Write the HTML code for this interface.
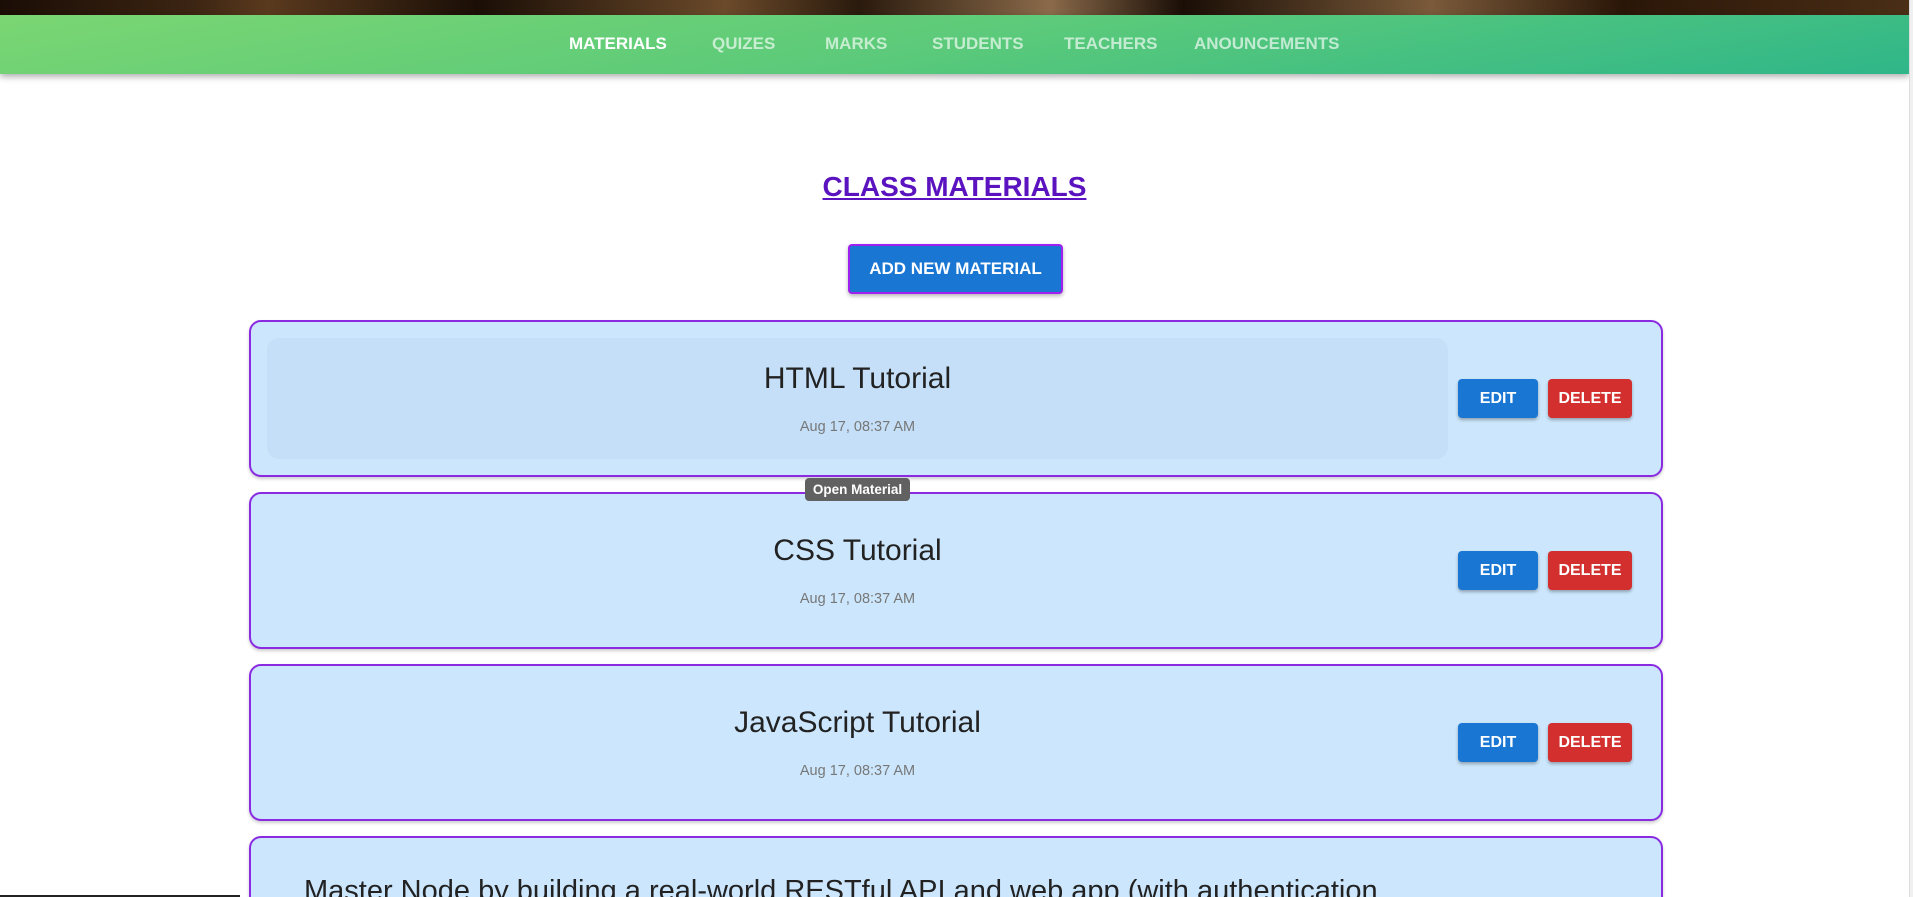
<!DOCTYPE html>
<html style="overflow:hidden;height:897px"><head><meta charset="utf-8"><style>
*{box-sizing:border-box;margin:0;padding:0}
body{width:1913px;height:897px;overflow:hidden;background:#fff;font-family:"Liberation Sans",Arial,sans-serif;position:relative}
.strip{position:absolute;left:0;top:0;width:1909px;height:15px;background:linear-gradient(90deg,#1a0d05 0%,#3b2412 10%,#5a3a1e 14%,#1a0e06 25%,#6b4a2a 38%,#2a1a0d 45%,#8a6a4a 55%,#1a0e06 62%,#7a5a3a 75%,#2a1608 85%,#4a2e16 100%)}
.nav{position:absolute;left:0;top:15px;width:1909px;height:59px;background:linear-gradient(170deg,#7bd672 0%,#5bca7a 50%,#2fb689 100%);box-shadow:0 3px 6px rgba(0,0,0,.3)}
.nav span{position:absolute;top:19px;font-size:17px;font-weight:bold;color:rgba(255,255,255,.65)}
.scroll{position:absolute;left:1909px;top:0;width:4px;height:897px;background:#f0f0f0;border-left:1px solid #ddd}
h1{position:absolute;left:0;width:1909px;top:171px;text-align:center;font-size:28px;font-weight:bold;color:#5b13c0;text-decoration:underline}
.add{position:absolute;left:848px;top:244px;width:215px;height:50px;background:#1976d2;border:2px solid #a020f0;border-radius:4px;color:#fff;font-weight:bold;font-size:17px;text-align:center;line-height:46px;box-shadow:0 2px 4px rgba(0,0,0,.3)}
.card{position:absolute;left:249px;width:1414px;height:157px;background:#cce7fd;border:2px solid #8a2be2;border-radius:12px;box-shadow:0 2px 3px rgba(0,0,0,.2);overflow:hidden}
.inner{position:absolute;left:16px;top:16px;width:1181px;height:121px;border-radius:12px}
.t{position:absolute;left:0;width:1181px;text-align:center;top:24px;font-size:30px;color:#222}
.d{position:absolute;left:0;width:1181px;text-align:center;top:81px;font-size:14.5px;color:#777}
.btn{position:absolute;top:57px;height:39px;border-radius:4px;color:#fff;font-weight:bold;font-size:16px;text-align:center;line-height:39px;box-shadow:0 2px 3px rgba(0,0,0,.3)}
.e{left:1207px;width:80px;background:#1976d2}
.x{left:1297px;width:84px;background:#d32f2f}
.tip{position:absolute;left:805px;top:478px;width:105px;height:23px;background:#616161;border-radius:4px;color:#fff;font-size:13.5px;font-weight:bold;text-align:center;line-height:23px}
</style></head><body>
<div class="strip"></div>
<div class="nav">
<span style="left:569px;color:#fff">MATERIALS</span>
<span style="left:712px">QUIZES</span>
<span style="left:825px">MARKS</span>
<span style="left:932px">STUDENTS</span>
<span style="left:1064px">TEACHERS</span>
<span style="left:1194px">ANOUNCEMENTS</span>
</div>
<div class="scroll"></div>
<h1>CLASS MATERIALS</h1>
<div class="add">ADD NEW MATERIAL</div>
<div class="card" style="top:320px"><div class="inner" style="background:#c4dff7"><div class="t">HTML Tutorial</div><div class="d">Aug 17, 08:37 AM</div></div><div class="btn e">EDIT</div><div class="btn x">DELETE</div></div>
<div class="card" style="top:492px"><div class="inner"><div class="t">CSS Tutorial</div><div class="d">Aug 17, 08:37 AM</div></div><div class="btn e">EDIT</div><div class="btn x">DELETE</div></div>
<div class="card" style="top:664px"><div class="inner"><div class="t">JavaScript Tutorial</div><div class="d">Aug 17, 08:37 AM</div></div><div class="btn e">EDIT</div><div class="btn x">DELETE</div></div>
<div class="card" style="top:836px;height:61px;border-bottom:none;border-radius:12px 12px 0 0"><div style="position:absolute;left:53px;top:37px;font-size:29px;color:#222;white-space:nowrap">Master Node by building a real-world RESTful API and web app (with authentication</div></div>
<div class="tip">Open Material</div>
<div style="position:absolute;left:0;top:895px;width:240px;height:2px;background:#222"></div>
</body></html>
